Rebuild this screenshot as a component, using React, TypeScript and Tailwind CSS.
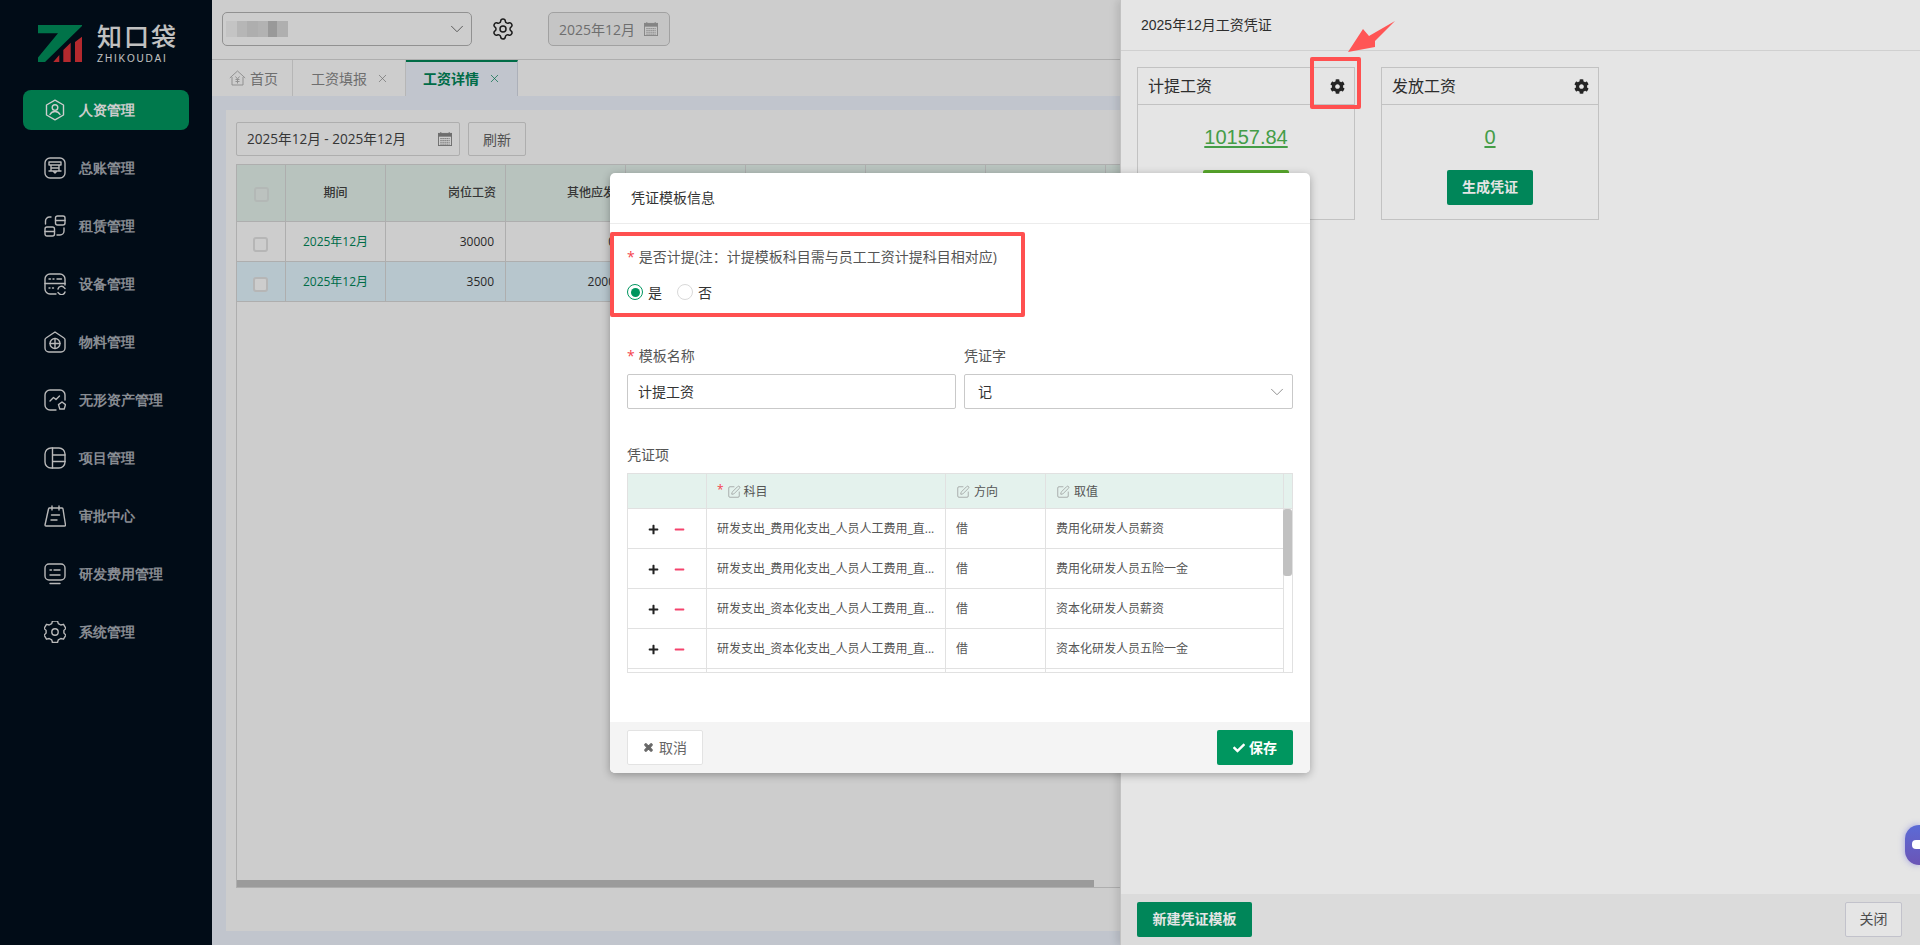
import React from "react";
import { Settings, ChevronDown, X, SquarePen } from "lucide-react";
import { FaCog, FaPlus, FaMinus, FaCheck, FaTimes } from "react-icons/fa";

const S = ({ children }: { children: React.ReactNode }) => (
  <svg viewBox="0 0 22 22" className="w-[22px] h-[22px] shrink-0" fill="none" stroke="currentColor" strokeWidth="1.4" strokeLinecap="round" strokeLinejoin="round">
    {children}
  </svg>
);

const menu: [string, React.ReactNode][] = [
  ["人资管理", <S><path d="M11 1.2 19.5 6v10L11 20.8 2.5 16V6z" /><circle cx="11" cy="8.6" r="2.8" /><path d="M6 15.5c1-2 3-3 5-3s4 1 5 3" /></S>],
  ["总账管理", <S><rect x="1" y="1" width="20" height="20" rx="5" /><path d="M5 5h12v3H5zM7 8v6h8V8M5 14h4l2 2 2-2h4M8 11h6" /></S>],
  ["租赁管理", <S><path d="M1.5 9V6a4 4 0 0 1 4-4h1.5" /><rect x="11.5" y="1" width="9.5" height="9" rx="2" /><path d="M11.5 5.500h9.500" /><rect x="1" y="12" width="9.500" height="9" rx="2" /><path d="M1 16.500h9.500M13 20h3a4 4 0 0 0 4-4v-3" /></S>],
  ["设备管理", <S><path d="M12 21H6a5 5 0 0 1-5-5V6a5 5 0 0 1 5-5h10a5 5 0 0 1 5 5v6" /><path d="M1 10.500h20M5 6h1.500M9 6h1M13 6h4.500M5 15h1M8.500 15h1" /><path d="M14 16a3.500 3.500 0 0 1 6-1.500l1 1M21 19a3.500 3.500 0 0 1-6 1.500l-1-1" /></S>],
  ["物料管理", <S><path d="M11 1 20 7a2 2 0 0 1 1 2v8a4 4 0 0 1-4 4H5a4 4 0 0 1-4-4V9a2 2 0 0 1 1-2z" /><circle cx="11" cy="12.500" r="5" /><path d="M11 7.500v10M6 12.500h10" /></S>],
  ["无形资产管理", <S><path d="M12 21H6a5 5 0 0 1-5-5V6a5 5 0 0 1 5-5h10a5 5 0 0 1 5 5v5" /><path d="m6 12 3.500-3.500 2.500 2 3.500-3.500" /><path d="m18 13 3.500 2.600-1.300 4.400h-4.400l-1.300-4.400z" /></S>],
  ["项目管理", <S><rect x="1" y="1" width="20" height="20" rx="6" /><path d="M8.500 1v20M8.500 8h12.500M8.500 14.500h12.500" /></S>],
  ["审批中心", <S><path d="M5 3h13a1 1 0 0 1 1 1l2.500 16a1 1 0 0 1-1 1H2a1 1 0 0 1-1-1L4.500 4z" /><path d="M8 1v4M15 1v4M7.500 10h8M7 15h6" /></S>],
  ["研发费用管理", <S><rect x="1" y="1" width="20" height="16" rx="4" /><path d="M6 7h1.500M10 7h6M6 12h10M6 20.500h10" /></S>],
  ["系统管理", <S><path d="M8.500 1.500h5l.8 2.700 2.500 1.400 2.700-.7 2.400 4.200-2 2 0 2.800 2 2-2.400 4.200-2.700-.7-2.500 1.400-.8 2.700h-5" transform="translate(0 -1.500) scale(1 .98)" /><path d="M8.500 1.500l-.8 2.700-2.500 1.400-2.700-.7L.1 9.100l2 2v2.800l-2 2 2.400 4.200 2.700-.7 2.500 1.400.8 2.700" transform="translate(0 -1.500) scale(1 .98)" /><circle cx="11" cy="11" r="3.200" /></S>],
];

const Logo = () => (
  <div className="flex items-start h-[38px] mt-[25px] ml-[38px] gap-[15px]">
    <svg width="44" height="37" viewBox="0 0 44 37" className="shrink-0">
      <path d="M0 0H44V1L7 37H0V32.500L20 8.300H0z" fill="#00905c" />
      <path d="M15.300 37 21.300 30V37zM25.300 37V25L32.700 17.700V37zM37 37V17L44 11.700V37z" fill="#e0343a" />
    </svg>
    <div className="flex flex-col text-[#f0f0f0] [font-family:'Liberation_Sans','Noto_Sans_CJK_SC',sans-serif]">
      <span className="text-[25px] leading-[25px] font-medium tracking-[2px] whitespace-nowrap">知口袋</span>
      <span className="text-[10px] leading-[10px] mt-[4px] tracking-[1.800px] whitespace-nowrap">ZHIKOUDAI</span>
    </div>
  </div>
);

const Sidebar = () => (
  <aside className="w-[212px] shrink-0 bg-[#03101e] flex flex-col">
    <Logo />
    <nav className="mt-[27px] flex flex-col gap-[18px] pl-[23px]">
      {menu.map(([name, icon], i) => (
        <div key={name} className={`w-[166px] h-[40px] rounded-[8px] flex items-center pl-[21px] gap-[13px] text-[14px] font-bold ${i === 0 ? "bg-[#00975f] text-white" : "text-[#a9aeb6]"}`}>
          <span className={i === 0 ? "text-white" : "text-[#e6e6e6]"}>{icon}</span>
          <span className="whitespace-nowrap pb-[2px]">{name}</span>
        </div>
      ))}
    </nav>
  </aside>
);

const Calendar = ({ c = "#888" }: { c?: string }) => (
  <svg width="14" height="14" viewBox="0 0 15 15" className="shrink-0">
    <rect x=".5" y="1.500" width="14" height="13" fill="none" stroke={c} />
    <rect x=".5" y="1.500" width="14" height="3.500" fill={c} />
    <path d="M3 0v2M12 0v2M2.500 7h10M2.500 9h10M2.500 11h10M2.500 13h10" stroke={c} strokeDasharray="1.500 .7" />
  </svg>
);

const HomeIcon = () => (
  <svg width="17" height="16" viewBox="0 0 17 16" fill="none" stroke="#b5b5b5" strokeWidth="1" className="shrink-0">
    <path d="M.8 8 8.500 1l7.700 7M3 7v8h11V7" />
    <path d="M6.500 6.500 8.500 9l2-2.500M6.500 9.500h4M6.500 11.500h4M8.500 9v4.500" />
  </svg>
);

const Check = () => <span className="block w-[15px] h-[15px] rounded-[3px] border-2 border-[#e2e2e2] bg-white" />;

const cols = "grid grid-cols-[49px_100px_120px_120px_120px_120px_120px_120px_120px]";
const cell = "border-r border-b border-[#d9d9d9] flex items-center text-[12px]";

const Row = ({ a, b, hl }: { a: string; b: string; hl?: boolean }) => (
  <div className={`${cols} h-[40px] shrink-0 ${hl ? "bg-[#e4f6ff]" : ""}`}>
    <div className={`${cell} justify-center pt-[5px] pr-[2px]`}><Check /></div>
    <div className={`${cell} justify-center text-[#00875a] pt-[1px]`}>2025年12月</div>
    <div className={`${cell} justify-end pr-[11px] text-[#333] pt-[1px]`}>{a}</div>
    <div className={`${cell} justify-end pr-[10px] text-[#333] pt-[1px]`}>{b}</div>
    {[0, 1, 2, 3, 4].map((i) => <div key={i} className={cell} />)}
  </div>
);

const Main = () => (
  <main className="w-[1708px] shrink-0 flex flex-col [font-family:'Open_Sans','Noto_Sans_CJK_SC',sans-serif] text-[#444]">
    <div className="h-[60px] shrink-0 bg-white border-b border-[#d8d8d8] flex items-center pl-[10px] pb-[1px]">
      <div className="w-[250px] h-[34px] rounded-[5px] border border-[#b5b5b5] relative flex items-center">
        <div className="flex ml-[3px] h-[16px] opacity-80">
          <span className="w-[11px] h-full bg-[#f2f2f2]" />
          <span className="w-[10px] h-full bg-[#dcdcdc]" />
          <span className="w-[11px] h-full bg-[#d0d0d0]" />
          <span className="w-[10px] h-full bg-[#d6d6d6]" />
          <span className="w-[9px] h-full bg-[#b0b0b0]" />
          <span className="w-[11px] h-full bg-[#d2d2d2]" />
        </div>
        <ChevronDown className="absolute right-[3px] top-[5px] w-[22px] h-[22px] text-[#666]" strokeWidth={1} />
      </div>
      <Settings className="ml-[19px] w-[24px] h-[24px] text-[#222]" strokeWidth={1.500} />
      <div className="ml-[33px] w-[122px] h-[34px] rounded-[5px] border border-[#c9c9c9] bg-[#f5f5f5] flex items-center pl-[10px] text-[14px] text-[#8a8a8a] gap-[9px] whitespace-nowrap">
        2025年12月<Calendar c="#a5a5a5" />
      </div>
    </div>
    <div className="h-[36px] shrink-0 bg-white flex text-[14px] text-[#8a8a8a]">
      <div className="w-[81px] border-r border-[#e3e3e3] flex items-center pl-[17px] gap-[4px]"><HomeIcon />首页</div>
      <div className="w-[113px] border-r border-[#e3e3e3] flex items-center pl-[18px]">工资填报<X className="ml-[9px] w-[13px] h-[13px]" strokeWidth={1.300} /></div>
      <div className="w-[112px] border-t-2 border-r border-[#00875a] border-r-[#d6dbe6] bg-[#f0f5ff] flex items-center pl-[17px] font-bold text-[#00875a] pb-[2px]">工资详情<X className="ml-[9px] w-[13px] h-[13px]" strokeWidth={1.300} /></div>
    </div>
    <div className="flex-1 min-h-0 bg-[#f0f5ff] px-[14px] pt-[14px] pb-[14px] flex">
      <div className="flex-1 bg-white px-[10px] pt-[12px] flex flex-col">
        <div className="flex gap-[8px] h-[34px] shrink-0">
          <div className="w-[224px] border border-[#d9d9d9] rounded-[2px] flex items-center justify-between pl-[10px] pr-[7px] text-[13.600px] whitespace-nowrap">2025年12月 - 2025年12月<Calendar /></div>
          <div className="w-[58px] border border-[#d9d9d9] rounded-[2px] flex items-center justify-center text-[14px] text-[#666]">刷新</div>
        </div>
        <div className="mt-[8px] w-[1600px] h-[724px] border-l border-t border-b border-[#d9d9d9] flex flex-col">
          <div className={`${cols} h-[57px] shrink-0 bg-[#e5f3ec] text-[#444]`}>
            <div className={`${cell} justify-center pt-[3px]`}><span className="block w-[15px] h-[15px] rounded-[3px] border-2 border-[#dfe5e2] bg-[#eaf2ee]" /></div>
            <div className={`${cell} justify-center font-medium`}>期间</div>
            <div className={`${cell} justify-end pr-[9px] font-medium`}>岗位工资</div>
            <div className={`${cell} justify-end pr-[10px] font-medium`}>其他应发</div>
            {[0, 1, 2, 3, 4].map((i) => <div key={i} className={cell} />)}
          </div>
          <Row a="30000" b="0" />
          <Row a="3500" b="2000" hl />
          <div className="flex-1" />
          <div className="h-[7px] w-[857px] bg-[#c1c1c1] shrink-0" />
        </div>
      </div>
    </div>
  </main>
);

const VoucherCard = ({ title, value, btn }: { title: string; value: string; btn: string }) => (
  <div className="w-[218px] h-[153px] border border-[#d9d9d9] flex flex-col">
    <div className="h-[37px] shrink-0 border-b border-[#d9d9d9] flex items-center justify-between pl-[10px] pr-[9px] pt-[1px] text-[16px] text-[#333]">
      {title}<FaCog className="w-[15px] h-[15px] text-[#2a2a2a]" />
    </div>
    <div className="flex-1 flex flex-col items-center">
      <span className="mt-[19px] h-[26px] leading-[26px] text-[20px] text-[#4caf50] underline underline-offset-2">{value}</span>
      <span className={`mt-[20px] w-[86px] h-[35px] rounded-[2px] flex items-center justify-center text-[14px] font-bold text-white ${btn}`}>生成凭证</span>
    </div>
  </div>
);

const Drawer = () => (
  <section className="absolute right-0 top-0 w-[800px] h-[945px] bg-white border-l border-[#d8d8d8] shadow-[-3px_0_8px_rgba(0,0,0,0.12)] flex flex-col [font-family:'Liberation_Sans','Noto_Sans_CJK_SC',sans-serif]">
    <div className="h-[51px] shrink-0 border-b border-[#e8e8e8] flex items-center pl-[20px] pt-[1px] text-[14px] text-[#333]">2025年12月工资凭证</div>
    <div className="flex-1 pl-[16px] pt-[16px] flex items-start gap-[26px]">
      <VoucherCard title="计提工资" value="10157.84" btn="bg-[#64bd32]" />
      <VoucherCard title="发放工资" value="0" btn="bg-[#009664]" />
    </div>
    <div className="h-[51px] shrink-0 bg-[#f4f4f4] flex items-center justify-between pl-[16px] pr-[18px]">
      <span className="w-[115px] h-[35px] rounded-[2px] bg-[#009664] text-white text-[14px] font-bold flex items-center justify-center">新建凭证模板</span>
      <span className="w-[57px] h-[35px] rounded-[2px] border border-[#d9d9e3] bg-white text-[14px] text-[#555] flex items-center justify-center">关闭</span>
    </div>
  </section>
);

const vrows = [
  ["研发支出_费用化支出_人员人工费用_直...", "费用化研发人员薪资"],
  ["研发支出_费用化支出_人员人工费用_直...", "费用化研发人员五险一金"],
  ["研发支出_资本化支出_人员人工费用_直...", "资本化研发人员薪资"],
  ["研发支出_资本化支出_人员人工费用_直...", "资本化研发人员五险一金"],
];
const vcols = "grid grid-cols-[79px_239px_100px_238px_1fr]";
const vcell = "border-r border-b border-[#e1e1e1] flex items-center px-[10px] min-w-0 pt-[1px]";

const Star = () => <span className="text-[#f5424d] mr-[4px]">*</span>;
const Field = ({ children, className = "" }: { children: React.ReactNode; className?: string }) => (
  <div className={`h-[35px] border border-[#c9c9c9] rounded-[2px] flex items-center pl-[10px] text-[14px] text-[#333] ${className}`}>{children}</div>
);
const Pen = () => <SquarePen className="w-[14px] h-[14px] text-[#888] shrink-0" strokeWidth={1.100} />;

const Modal = () => (
  <section className="absolute left-[610px] top-[173px] w-[700px] h-[600px] bg-white rounded-[5px] shadow-[0_2px_8px_rgba(0,0,0,0.3)] flex flex-col overflow-hidden [font-family:'Open_Sans','Noto_Sans_CJK_SC',sans-serif] text-[14px] text-[#555]">
    <div className="h-[51px] shrink-0 border-b border-[#ececec] flex items-center pl-[21px] pb-[1px] text-[#333]">凭证模板信息</div>
    <div className="flex-1 px-[17px] pt-[23px] flex flex-col">
      <div className="h-[20px] leading-[20px] whitespace-nowrap"><Star />是否计提(注：计提模板科目需与员工工资计提科目相对应)</div>
      <div className="mt-[15px] h-[20px] flex items-center text-[#333]">
        <span className="w-[16px] h-[16px] rounded-full border border-[#00965f] flex items-center justify-center"><span className="block w-[9px] h-[9px] rounded-full bg-[#00965f]" /></span>
        <span className="ml-[5px]">是</span>
        <span className="ml-[15px] w-[16px] h-[16px] rounded-full border border-[#d9d9d9]" />
        <span className="ml-[5px]">否</span>
      </div>
      <div className="mt-[44px] grid grid-cols-[329px_329px] gap-x-[8px]">
        <div className="h-[20px] leading-[20px]"><Star />模板名称</div>
        <div className="h-[20px] leading-[20px]">凭证字</div>
        <Field className="mt-[8px]">计提工资</Field>
        <Field className="mt-[8px] justify-between pl-[13px] pr-[4px]">记<ChevronDown className="w-[22px] h-[22px] text-[#888]" strokeWidth={1} /></Field>
      </div>
      <div className="mt-[36px] h-[20px] leading-[20px]">凭证项</div>
      <div className="relative mt-[8px] w-[666px] h-[200px] border border-[#e1e1e1] overflow-hidden text-[12px] shrink-0">
        <div className={`${vcols} h-[35px] bg-[#e4f2ed]`}>
          <div className={vcell} />
          <div className={`${vcell} gap-[3px]`}><span className="text-[#f5424d] -mt-[3px]">*</span><Pen /><span>科目</span></div>
          <div className={`${vcell} gap-[4px]`}><Pen /><span>方向</span></div>
          <div className={`${vcell} gap-[4px]`}><Pen /><span>取值</span></div>
          <div className="border-b border-[#e1e1e1]" />
        </div>
        {vrows.map(([a, b], i) => (
          <div key={i} className={`${vcols} h-[40px]`}>
            <div className={`${vcell} gap-[15px] pl-[20px]`}>
              <FaPlus className="w-[11px] h-[11px] text-[#222]" />
              <FaMinus className="w-[11px] h-[11px] text-[#f5426c]" />
            </div>
            <div className={vcell}><span className="whitespace-nowrap">{a}</span></div>
            <div className={vcell}>借</div>
            <div className={vcell}>{b}</div>
            <div />
          </div>
        ))}
        <div className={`${vcols} h-[40px]`}>
          <div className={vcell} /><div className={vcell} /><div className={vcell} /><div className={vcell} /><div />
        </div>
        <div className="absolute right-0 top-[35px] w-[9px] h-[67px] rounded-[3px] bg-[#c1c1c1]" />
      </div>
    </div>
    <div className="h-[51px] shrink-0 bg-[#f4f4f4] flex items-center justify-between pl-[17px] pr-[17px]">
      <span className="w-[76px] h-[35px] rounded-[2px] border border-[#e3e3e3] bg-white flex items-center justify-center gap-[5px] text-[#666]"><FaTimes className="w-[11px] h-[11px]" stroke="currentColor" strokeWidth={50} />取消</span>
      <span className="w-[76px] h-[35px] rounded-[2px] bg-[#00965f] text-white font-bold flex items-center justify-center gap-[4px]"><FaCheck className="w-[12px] h-[12px]" />保存</span>
    </div>
  </section>
);

export default function App() {
  return (
    <div className="relative w-[1920px] h-[945px] overflow-hidden flex bg-white">
      <Sidebar />
      <Main />
      <div className="absolute inset-0 bg-black/10" />
      <Drawer />
      <div className="absolute inset-0 bg-black/10" />
      <Modal />
      <div className="absolute left-[610px] top-[232px] w-[415px] h-[85px] border-4 border-[#ff5050] rounded-[2px]" />
      <div className="absolute left-[1310px] top-[57px] w-[51px] h-[52px] border-4 border-[#ff5050] rounded-[2px]" />
      <svg className="absolute left-[1340px] top-[15px]" width="60" height="42" viewBox="1340 15 60 42">
        <path d="M1348 52 1363 29l6 7 26-15-20 20 0 6z" fill="#ff5555" />
      </svg>
      <div className="absolute right-0 top-[825px] w-[15px] h-[40px] rounded-l-[14px] bg-gradient-to-b from-[#5b6bd6] to-[#6a54b6] shadow-[0_0_6px_rgba(90,90,220,0.5)] overflow-hidden">
        <span className="absolute left-[7px] top-[15px] block w-[11px] h-[9px] rounded-[4px] bg-white" />
      </div>
    </div>
  );
}
